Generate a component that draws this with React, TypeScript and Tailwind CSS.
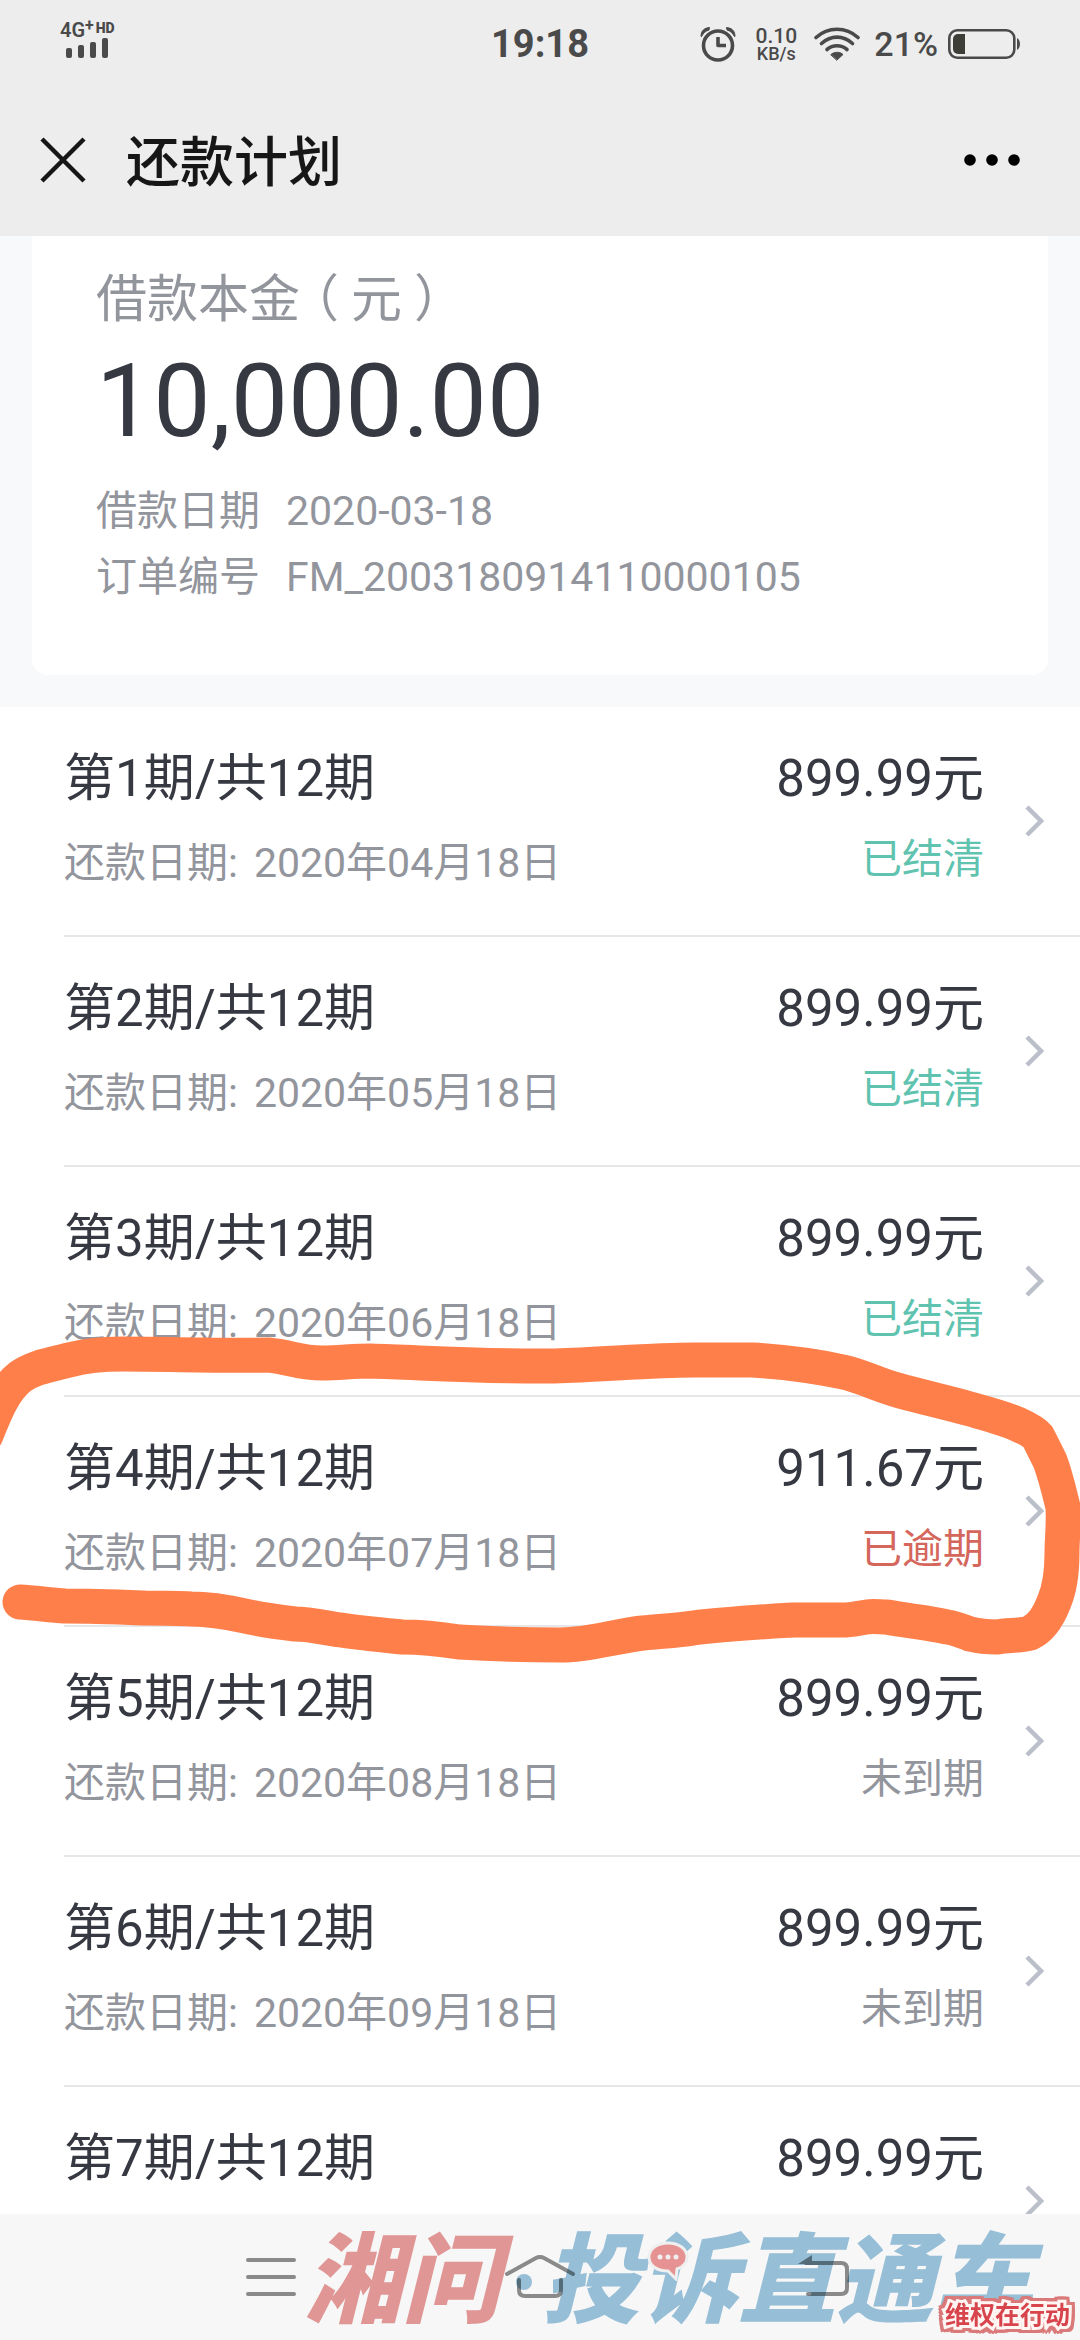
import { clsx } from "clsx";

type Status = "已结清" | "已逾期" | "未到期";

type Installment = {
  no: number;
  amount: string;
  date?: string;
  status?: Status;
};

const TOTAL = 12;

const installments: Installment[] = [
  { no: 1, date: "2020年04月18日", amount: "899.99", status: "已结清" },
  { no: 2, date: "2020年05月18日", amount: "899.99", status: "已结清" },
  { no: 3, date: "2020年06月18日", amount: "899.99", status: "已结清" },
  { no: 4, date: "2020年07月18日", amount: "911.67", status: "已逾期" },
  { no: 5, date: "2020年08月18日", amount: "899.99", status: "未到期" },
  { no: 6, date: "2020年09月18日", amount: "899.99", status: "未到期" },
  { no: 7, amount: "899.99" },
];

const statusColor: Record<Status, string> = {
  已结清: "text-[#5fc3b0]",
  已逾期: "text-[#d4665c]",
  未到期: "text-[#93959d]",
};

function SignalIcon() {
  return (
    <svg viewBox="0 0 44 20" className="ml-1.5 h-5 w-11" fill="currentColor" aria-hidden="true">
      <rect x="0" y="10" width="6" height="10" rx="2" />
      <rect x="12" y="7" width="6" height="13" rx="2" />
      <rect x="24" y="4" width="6" height="16" rx="2" />
      <rect x="36" y="0" width="6" height="20" rx="2" />
    </svg>
  );
}

function AlarmIcon() {
  return (
    <svg viewBox="0 0 36 36" className="size-9" fill="none" stroke="currentColor" aria-hidden="true">
      <circle cx="18" cy="19.5" r="14.5" strokeWidth="3.6" />
      <path d="M18 11v8.5h8" strokeWidth="3.6" strokeLinejoin="round" />
      <path d="M1 10.5C1 5 4 2 9.5 1.5L9 4C5.5 5 3.5 7 1.5 10.5Z" fill="currentColor" strokeWidth="1" />
      <path d="M35 10.5C35 5 32 2 26.5 1.5L27 4C30.5 5 32.5 7 34.5 10.5Z" fill="currentColor" strokeWidth="1" />
    </svg>
  );
}

function WifiIcon() {
  return (
    <svg viewBox="0 0 46 34" className="h-[34px] w-[46px]" fill="none" stroke="currentColor" strokeWidth="3.6" strokeLinecap="round" aria-hidden="true">
      <path d="M2 10.5C14 -.5 32 -.5 44 10.5" />
      <path d="M7.5 16.5C17 8 29 8 38.5 16.5" />
      <path d="M13 22.5C19 17.5 27 17.5 33 22.5" />
      <path d="M17 27.5C20 24.5 26 24.5 29 27.5L23 33Z" fill="currentColor" strokeWidth="1" strokeLinejoin="round" />
    </svg>
  );
}

function BatteryIcon() {
  return (
    <svg viewBox="0 0 72 30" className="h-[30px] w-[72px]" fill="none" aria-hidden="true">
      <rect x="1.3" y="1.3" width="65" height="27.4" rx="8" stroke="currentColor" strokeWidth="2.6" />
      <path d="M10 5h7v20h-7a5 5 0 0 1-5-5v-10a5 5 0 0 1 5-5Z" fill="#3d3e38" />
      <path d="M69 9c4 2 4 10 0 12Z" fill="currentColor" />
    </svg>
  );
}

function StatusBar() {
  return (
    <div className="grid h-[88px] grid-cols-[1fr_auto_1fr] items-center px-[60px] text-[#4a4a4a]">
      <div className="pb-2">
        <div className="flex items-start">
          <span className="text-[20px] leading-4 font-semibold">4G</span>
          <span className="text-[16px] leading-2 font-bold">+</span>
          <span className="ml-0.5 text-[14px] leading-3 font-black">HD</span>
        </div>
        <SignalIcon />
      </div>
      <span className="text-[38px] leading-none font-bold">19:18</span>
      <div className="flex items-center justify-end">
        <AlarmIcon />
        <div className="ml-4 w-12 text-center font-medium">
          <div className="text-[21px] leading-5">0.10</div>
          <div className="text-[18px] leading-4">KB/s</div>
        </div>
        <div className="ml-3.5">
          <WifiIcon />
        </div>
        <span className="ml-3.5 text-[34px] leading-none font-medium">21%</span>
        <div className="ml-2.5">
          <BatteryIcon />
        </div>
      </div>
    </div>
  );
}

function TitleBar() {
  return (
    <div className="flex h-[148px] items-center pr-[60px] pb-1 pl-10">
      <button type="button" aria-label="关闭" className="text-[#161616]">
        <svg viewBox="0 0 46 46" className="size-[46px]" fill="none" stroke="currentColor" strokeWidth="4.5" aria-hidden="true">
          <path d="M2 2l42 42M44 2L2 44" />
        </svg>
      </button>
      <h1 className="ml-10 pt-2 text-[54px] leading-none font-medium text-[#161616]">还款计划</h1>
      <button type="button" aria-label="更多" className="ml-auto text-black">
        <svg viewBox="0 0 56 12" className="h-3 w-14" fill="currentColor" aria-hidden="true">
          <circle cx="6" cy="6" r="5.8" />
          <circle cx="28" cy="6" r="5.8" />
          <circle cx="50" cy="6" r="5.8" />
        </svg>
      </button>
    </div>
  );
}

function LoanCard() {
  return (
    <section className="bg-[#f8f9fb] px-8 pb-8">
      <div className="rounded-b-2xl bg-white px-16 pt-7 pb-[65px] text-[#93959d]">
        <p className="text-[51px] leading-[72px]">
          借款本金
          <span className="mr-3 -ml-3">（</span>元<span className="ml-3">）</span>
        </p>
        <p className="text-[102px] leading-[130px] text-[#373942]">10,000.00</p>
        <dl className="mt-3 text-[41px] leading-[66px]">
          <div className="flex gap-[26px]">
            <dt>借款日期</dt>
            <dd>2020-03-18</dd>
          </div>
          <div className="flex gap-[26px]">
            <dt>订单编号</dt>
            <dd>FM_2003180914110000105</dd>
          </div>
        </dl>
      </div>
    </section>
  );
}

// Hand-drawn marker loop round the overdue installment
function MarkerLoop() {
  return (
    <svg
      viewBox="0 1320 1080 360"
      className="pointer-events-none absolute -top-[77px] left-0 z-10 w-full"
      fill="none"
      stroke="#ff7f4a"
      strokeWidth="35"
      strokeLinecap="round"
      strokeLinejoin="round"
      aria-hidden="true"
    >
      <path d="M-14 1435C-4 1410 4 1390 20 1377C34 1367 50 1365 69 1360C88 1355 104 1354 122 1354C170 1354 220 1356 268 1355C290 1357 300 1363 322 1363C340 1363 352 1361 371 1361C430 1363 490 1367 555 1366C600 1365 650 1360 693 1360C715 1360 735 1360 753 1360C785 1362 815 1366 843 1372C862 1376 878 1385 897 1390C922 1397 945 1402 970 1409C988 1414 1004 1418 1017 1424C1026 1428 1034 1432 1038 1437C1043 1447 1046 1453 1050 1461C1056 1477 1059 1491 1063 1507C1064 1525 1062 1538 1062 1553C1062 1570 1060 1588 1054 1602C1049 1615 1041 1628 1030 1633C1020 1636 1008 1635 997 1637C988 1637 978 1636 970 1634C962 1631 955 1628 947 1627C927 1622 907 1621 887 1617C880 1617 873 1616 867 1617C859 1618 851 1620 843 1620C827 1620 810 1620 793 1620C760 1622 725 1624 693 1628C676 1631 660 1631 643 1633C615 1636 590 1645 560 1645C526 1645 493 1644 459 1642C440 1639 421 1637 402 1637C382 1635 361 1633 341 1630C326 1628 310 1624 295 1624C278 1622 262 1620 245 1616C227 1612 209 1609 191 1609C176 1608 160 1608 145 1608C118 1607 92 1606 65 1606C50 1605 35 1603 20 1602" />
    </svg>
  );
}

function InstallmentRow({ item }: { item: Installment }) {
  return (
    <li className="relative h-[230px] pl-16 last:[&>a]:border-b-0">
      <a href={`#period-${item.no}`} className="flex h-full border-b-2 border-[#e6e7e9] pt-9 pr-9">
        <div className="flex-1">
          <h2 className="text-[51px] leading-[72px] text-[#373942]">
            第{item.no}期/共{TOTAL}期
          </h2>
          {item.date && (
            <p className="mt-5 flex gap-4 text-[41px] leading-[56px] text-[#93959d]">
              <span>还款日期:</span>
              <span>{item.date}</span>
            </p>
          )}
        </div>
        <div className="text-right">
          <p className="text-[51px] leading-[72px] text-[#373942]">{item.amount}元</p>
          {item.status && (
            <p className={clsx("mt-4 text-[41px] leading-[56px]", statusColor[item.status])}>{item.status}</p>
          )}
        </div>
        <svg viewBox="0 0 20 32" className="mt-[62px] ml-10 h-8 w-5 shrink-0" fill="none" stroke="#babfca" strokeWidth="4.5" aria-hidden="true">
          <path d="M3 2l14 14L3 30" />
        </svg>
      </a>
      {item.status === "已逾期" && <MarkerLoop />}
    </li>
  );
}

function Watermark() {
  return (
    <div className="pointer-events-none absolute inset-0 flex items-center justify-end pt-2.5 pr-12 mix-blend-multiply">
      <div className="flex items-center text-[98px] leading-none font-black whitespace-nowrap italic">
        <span className="text-[#e99b9b]">湘问</span>
        <span className="mr-2.5 ml-4 size-4 rounded-full bg-[#9bc5de]" />
        <span className="relative text-[#9bc5de]">
          投诉直通车
          <svg viewBox="0 0 44 40" className="absolute top-2 left-[104px] h-10 w-11" aria-hidden="true">
            <path d="M22 2C33 2 41 8 41 16C41 22 37 26 31 28L30 38L22 30C10 30 3 24 3 16C3 8 11 2 22 2Z" fill="#ee9797" stroke="#f7f7f7" strokeWidth="3" />
            <circle cx="14" cy="16" r="2.5" fill="#f7f7f7" />
            <circle cx="22" cy="16" r="2.5" fill="#f7f7f7" />
            <circle cx="30" cy="16" r="2.5" fill="#f7f7f7" />
          </svg>
        </span>
      </div>
    </div>
  );
}

function NavBar() {
  return (
    <nav className="relative isolate h-[126px] shrink-0 bg-[#f7f7f7]">
      <div className="grid h-full grid-cols-[1fr_auto_1fr] items-center px-[230px] text-[#8a8a8a]">
        <button type="button" aria-label="菜单" className="ml-4 justify-self-start">
          <svg viewBox="0 0 50 44" className="h-11 w-[50px]" fill="none" stroke="currentColor" strokeWidth="4" strokeLinecap="round" aria-hidden="true">
            <path d="M2 5h46M2 22h46M2 39h46" />
          </svg>
        </button>
        <button type="button" aria-label="主页">
          <svg viewBox="0 0 72 44" className="h-11 w-[72px]" fill="none" stroke="currentColor" strokeWidth="4" strokeLinecap="round" strokeLinejoin="round" aria-hidden="true">
            <path d="M3 19L32 3q4-2 8 0L69 19" />
            <path d="M15 25v10q0 6 6 6h30q6 0 6-6V25" />
          </svg>
        </button>
        <button type="button" aria-label="返回" className="justify-self-end">
          <svg viewBox="0 0 52 44" className="h-11 w-[52px]" fill="none" stroke="currentColor" strokeWidth="4" strokeLinecap="round" aria-hidden="true">
            <path d="M8 8h35q6 0 6 6v19q0 6-6 6H10" />
            <path d="M0 9L14 0v9Z" fill="currentColor" stroke="none" />
          </svg>
        </button>
      </div>
      <Watermark />
      <span className="absolute right-1.5 bottom-1 px-1 text-[25px] leading-10 font-bold text-[#d8444b] [-webkit-text-stroke:6px_#fff6f4] [filter:drop-shadow(3px_0_0_#d9797a)_drop-shadow(-3px_0_0_#d9797a)_drop-shadow(0_3px_0_#d9797a)_drop-shadow(0_-3px_0_#d9797a)] [paint-order:stroke_fill]">
        维权在行动
      </span>
    </nav>
  );
}

export default function App() {
  return (
    <div className="flex h-screen flex-col bg-white font-['Roboto','Noto_Sans_CJK_SC',sans-serif]">
      <header className="shrink-0 bg-[#ededed]">
        <StatusBar />
        <TitleBar />
      </header>
      <main className="min-h-0 flex-1 overflow-x-hidden overflow-y-auto [scrollbar-width:none]">
        <LoanCard />
        <ul>
          {installments.map((item) => (
            <InstallmentRow key={item.no} item={item} />
          ))}
        </ul>
      </main>
      <NavBar />
    </div>
  );
}
